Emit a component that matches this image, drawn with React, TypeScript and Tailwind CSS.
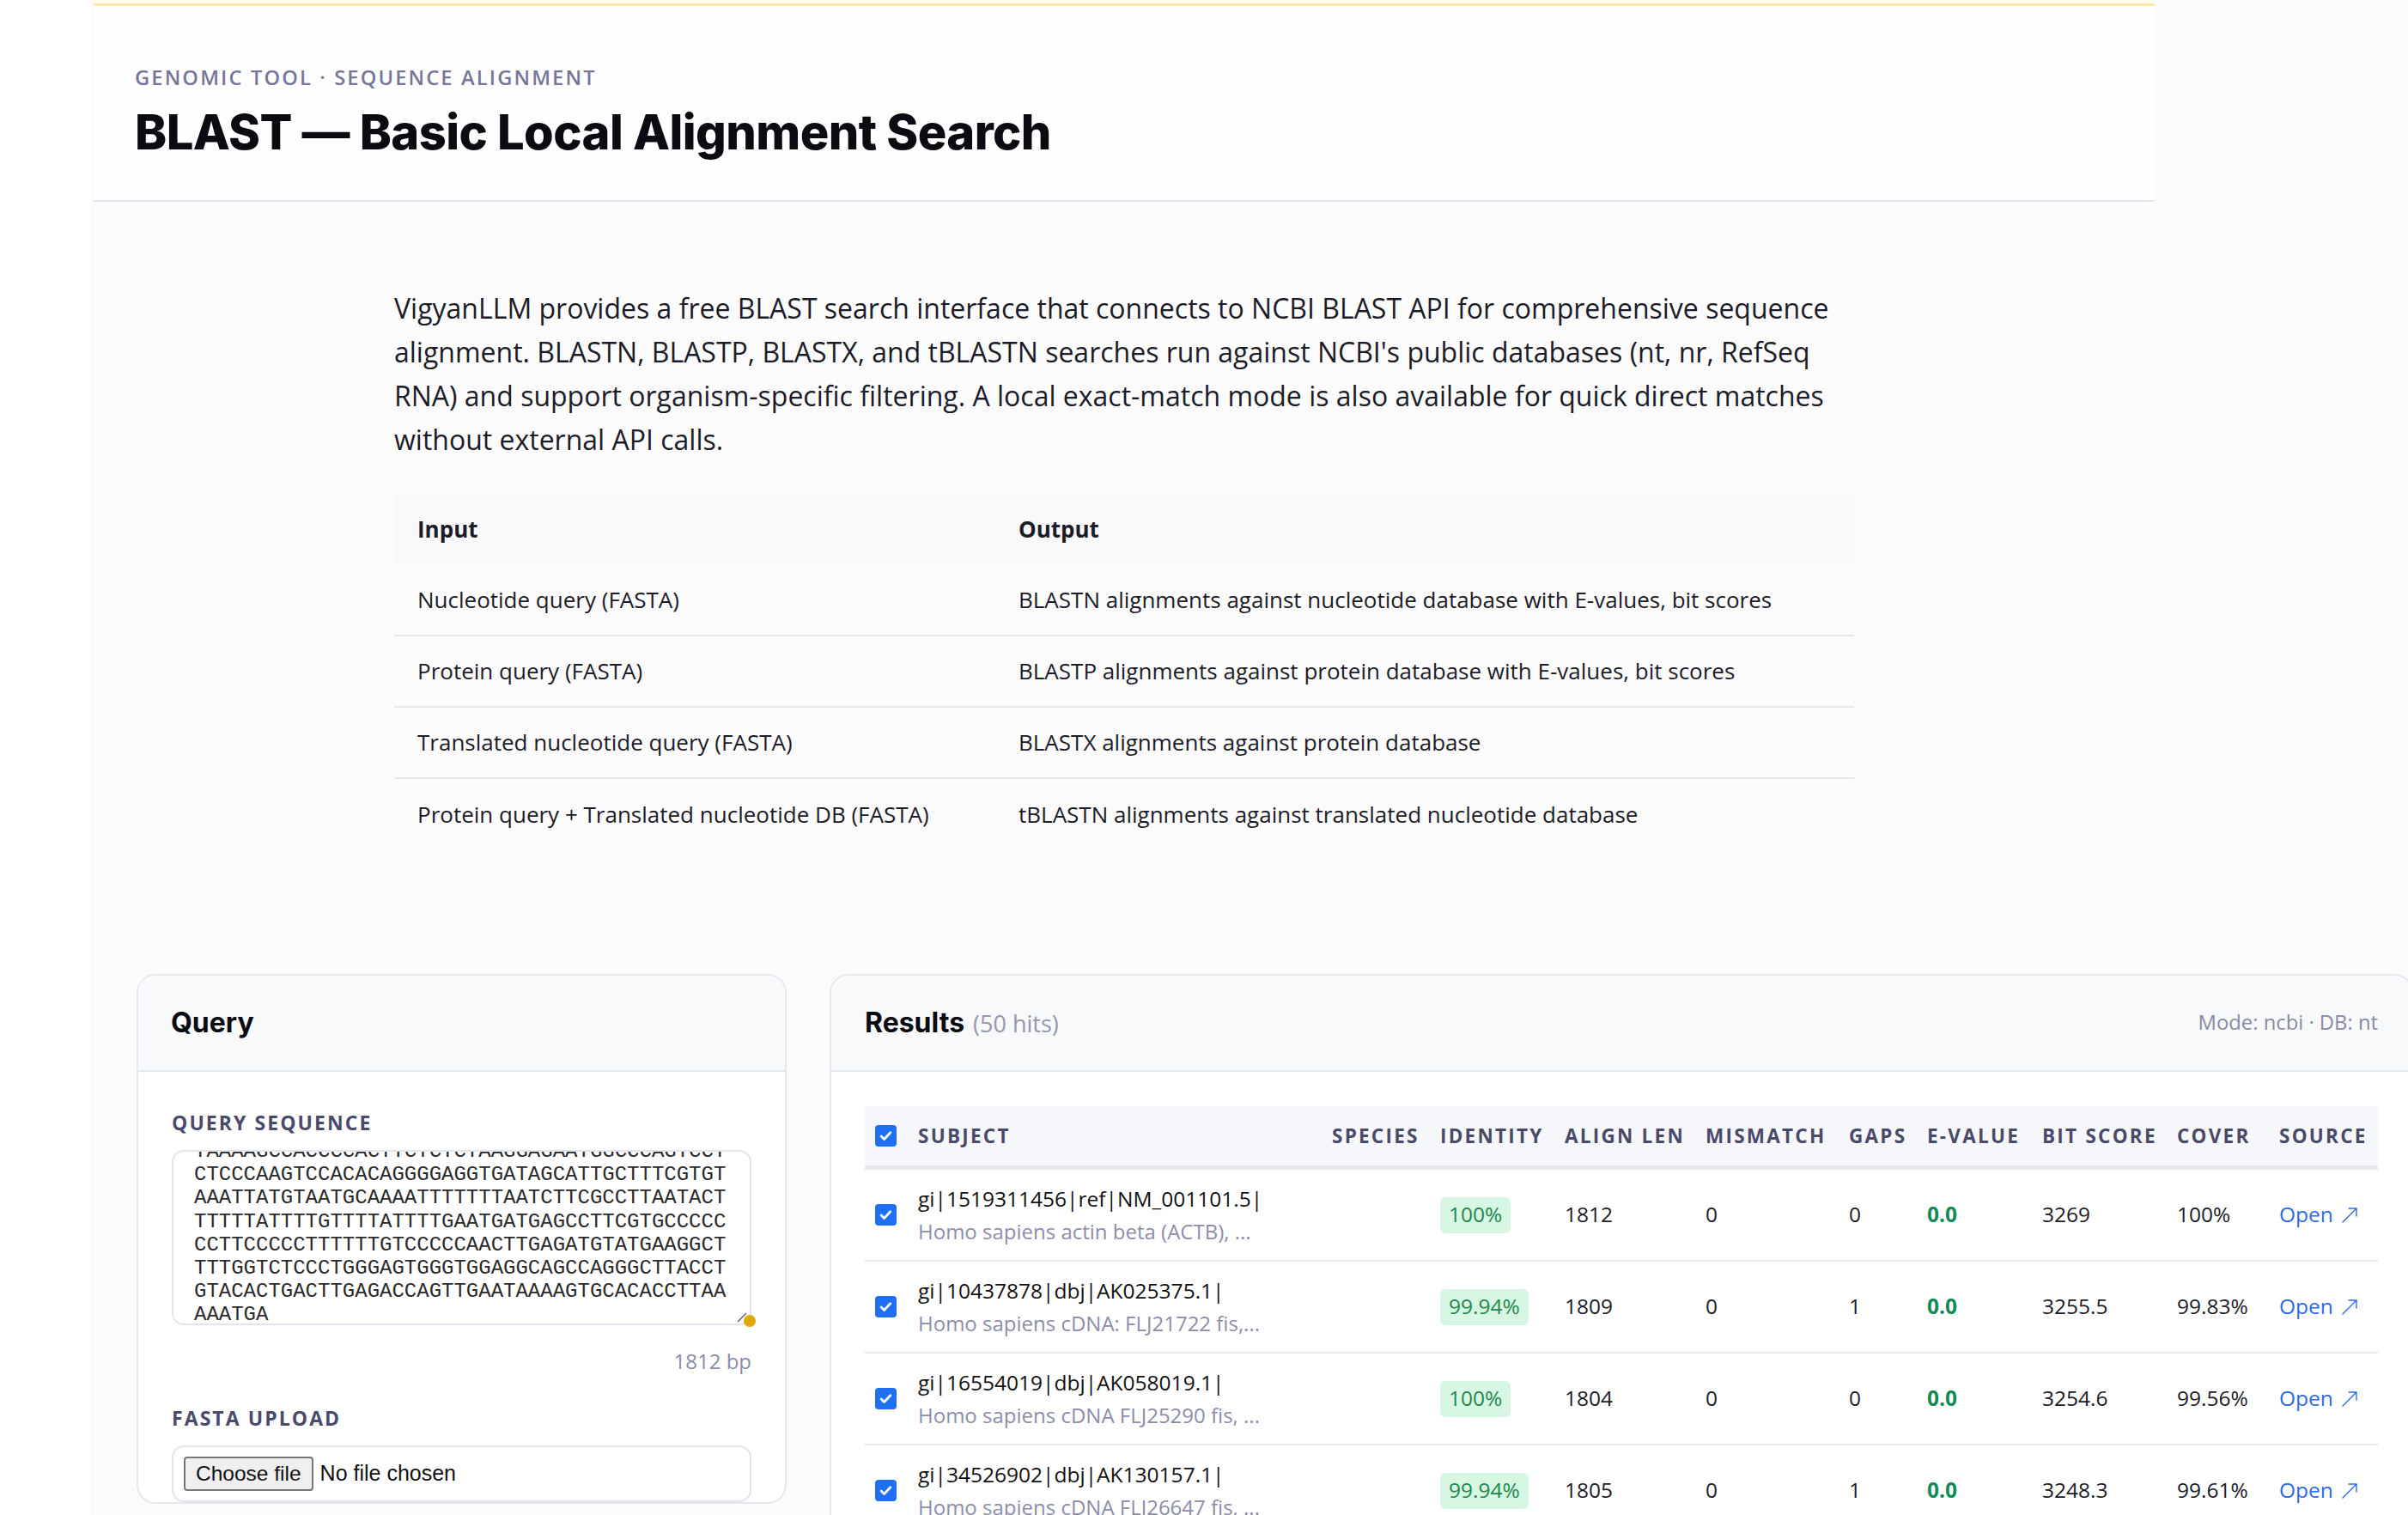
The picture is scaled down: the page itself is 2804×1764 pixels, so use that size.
const sans = "font-['Open_Sans','Noto_Sans',sans-serif]";
const display = "font-['Inter','Lato',sans-serif]";

const seqLines = [
  "TAAAAGCCACCCCACTTCTCTCTAAGGAGAATGGCCCAGTCCT",
  "CTCCCAAGTCCACACAGGGGAGGTGATAGCATTGCTTTCGTGT",
  "AAATTATGTAATGCAAAATTTTTTTAATCTTCGCCTTAATACT",
  "TTTTTATTTTGTTTTATTTTGAATGATGAGCCTTCGTGCCCCC",
  "CCTTCCCCCTTTTTTGTCCCCCAACTTGAGATGTATGAAGGCT",
  "TTTGGTCTCCCTGGGAGTGGGTGGAGGCAGCCAGGGCTTACCT",
  "GTACACTGACTTGAGACCAGTTGAATAAAAGTGCACACCTTAA",
  "AAATGA",
];

const ioRows = [
  ["Nucleotide query (FASTA)", "BLASTN alignments against nucleotide database with E-values, bit scores"],
  ["Protein query (FASTA)", "BLASTP alignments against protein database with E-values, bit scores"],
  ["Translated nucleotide query (FASTA)", "BLASTX alignments against protein database"],
  ["Protein query + Translated nucleotide DB (FASTA)", "tBLASTN alignments against translated nucleotide database"],
];

const hits = [
  { id: "gi|1519311456|ref|NM_001101.5|", desc: "Homo sapiens actin beta (ACTB), ...", ident: "100%", len: "1812", mm: "0", gaps: "0", ev: "0.0", bit: "3269", cover: "100%" },
  { id: "gi|10437878|dbj|AK025375.1|", desc: "Homo sapiens cDNA: FLJ21722 fis,...", ident: "99.94%", len: "1809", mm: "0", gaps: "1", ev: "0.0", bit: "3255.5", cover: "99.83%" },
  { id: "gi|16554019|dbj|AK058019.1|", desc: "Homo sapiens cDNA FLJ25290 fis, ...", ident: "100%", len: "1804", mm: "0", gaps: "0", ev: "0.0", bit: "3254.6", cover: "99.56%" },
  { id: "gi|34526902|dbj|AK130157.1|", desc: "Homo sapiens cDNA FLJ26647 fis, ...", ident: "99.94%", len: "1805", mm: "0", gaps: "1", ev: "0.0", bit: "3248.3", cover: "99.61%" },
];

const cols = "grid grid-cols-[50px_482px_126px_145px_164px_167px_91px_134px_157px_119px_127px]";

function Check() {
  return (
    <span className="flex h-[25px] w-[25px] items-center justify-center rounded-[4px] bg-[#1f6ff2]">
      <svg width="17" height="17" viewBox="0 0 16 16" fill="none">
        <path d="M3 8.5l3.2 3.2L13 4.5" stroke="white" strokeWidth="2.6" strokeLinecap="round" strokeLinejoin="round" />
      </svg>
    </span>
  );
}

function ArrowOut() {
  return (
    <svg width="22" height="22" viewBox="0 0 22 22" fill="none" className="ml-[8px]">
      <path d="M3 19L19 3M10 3h9v9" stroke="#2f6be6" strokeWidth="1.4" strokeLinecap="round" strokeLinejoin="round" />
    </svg>
  );
}

export default function App() {
  return (
    <div className={`${sans} relative h-[1764px] w-[2804px] overflow-hidden bg-white text-[#14141f]`}>
      <main className="ml-[105px] min-h-full bg-[#fbfbfc] pl-[4px]">
        {/* page header */}
        <header className="w-[2400px] border-b-2 border-[#e4e6f1] bg-[#fefefe]">
          <div className="h-[4px] bg-[#fffaea]" />
          <div className="h-[3px] bg-[#fde9a6]" />
          <div className="px-[48px] pb-[47px] pt-[67px]">
            <p className="text-[23.7px] leading-[32px] font-semibold tracking-[0.09em] text-[#76769a]">
              GENOMIC TOOL · SEQUENCE ALIGNMENT
            </p>
            <h1 className={`${display} mt-[16px] text-[56px] leading-[64px] font-extrabold tracking-[-0.01em] text-[#0b0b12]`}>
              BLAST — Basic Local Alignment Search
            </h1>
          </div>
        </header>

        <div className="w-[2400px]">
          {/* description */}
          <section className="mx-auto w-[1700px] pt-[98px]">
            <p className="text-[32px] leading-[51px] text-[#1c1c28]">
              VigyanLLM provides a free BLAST search interface that connects to NCBI BLAST API for comprehensive sequence
              alignment. BLASTN, BLASTP, BLASTX, and tBLASTN searches run against NCBI's public databases (nt, nr, RefSeq
              RNA) and support organism-specific filtering. A local exact-match mode is also available for quick direct
              matches without external API calls.
            </p>

            <table className="mt-[38px] w-full border-collapse text-[26px] text-[#1c1c28]">
              <thead>
                <tr className="h-[82px] bg-[#f7f8fa]">
                  <th className="w-[727px] pl-[27px] text-left font-bold">Input</th>
                  <th className="pl-0 text-left font-bold">Output</th>
                </tr>
              </thead>
              <tbody>
                {ioRows.map(([a, b], i) => (
                  <tr key={a} className={`h-[83px] ${i < ioRows.length - 1 ? "border-b-2 border-[#e6e7eb]" : ""}`}>
                    <td className="pl-[27px]">{a}</td>
                    <td>{b}</td>
                  </tr>
                ))}
              </tbody>
            </table>
          </section>
        </div>

        {/* tool panels */}
        <div className="mt-[145px] flex items-start gap-[50px] pl-[50px]">
          {/* query panel */}
          <div className="w-[757px] shrink-0 overflow-hidden rounded-[22px] border-2 border-[#e6e8f0] bg-white">
            <div className="flex h-[112px] items-center border-b-2 border-[#e6e8f0] bg-[#f8f9fb] px-[38px]">
              <h2 className={`${display} text-[32px] font-bold text-[#0b0b12]`}>Query</h2>
            </div>
            <div className="px-[39px] pt-[43px]">
              <label className="block text-[23px] leading-[32px] font-bold tracking-[0.09em] text-[#4a4a6c]">
                QUERY SEQUENCE
              </label>
              <div className="relative mt-[16px]">
                <div className="h-[204px] overflow-hidden rounded-[14px] border-2 border-[#e3e5ee] bg-white pl-[24px]">
                  <div className="-mt-[14px] font-['Liberation_Mono',monospace] text-[24px] leading-[27.2px] text-[#2a2a2a]">
                    {seqLines.map((l, i) => (
                      <div key={i}>{l}</div>
                    ))}
                  </div>
                </div>
                <svg className="absolute bottom-[3px] right-[4px]" width="14" height="14" viewBox="0 0 14 14">
                  <path d="M2 13L12 3" stroke="#555" strokeWidth="1.3" />
                </svg>
                <span className="absolute bottom-[-2px] right-[-5px] h-[14px] w-[14px] rounded-full bg-[#e0a80c]" />
              </div>
              <div className="mt-[26px] text-right text-[24px] leading-[32px] text-[#8c8ca6]">1812 bp</div>
              <label className="mt-[34px] block text-[23px] leading-[32px] font-bold tracking-[0.09em] text-[#4a4a6c]">
                FASTA UPLOAD
              </label>
              <div className="mt-[16px] flex h-[66px] items-center rounded-[14px] border-2 border-[#e3e5ee] bg-white pl-[12px]">
                <span className="flex h-[40px] items-center rounded-[4px] border-2 border-[#767676] bg-[#efefef] px-[12px] font-['Liberation_Sans',sans-serif] text-[24.5px] text-[#111]">
                  Choose file
                </span>
                <span className="ml-[8px] font-['Liberation_Sans',sans-serif] text-[25px] text-[#111]">No file chosen</span>
              </div>
            </div>
          </div>

          {/* results panel */}
          <div className="w-[1844px] shrink-0 overflow-hidden rounded-[22px] border-2 border-[#e6e8f0] bg-white">
            <div className="flex h-[112px] items-center justify-between border-b-2 border-[#e6e8f0] bg-[#f8f9fb] pl-[39px] pr-[39px]">
              <h2 className="flex items-baseline gap-[10px]">
                <span className={`${display} text-[32px] font-bold text-[#0b0b12]`}>Results</span>
                <span className="text-[27px] text-[#9696ad]">(50 hits)</span>
              </h2>
              <span className="text-[23.8px] text-[#8a8aa2]">Mode: ncbi · DB: nt</span>
            </div>
            <div className="px-[39px] pt-[40px]">
              <div className={`${cols} h-[74px] items-center border-b-[5px] border-[#e6e8ee] bg-[#f6f7fa] text-[22.5px] font-bold tracking-[0.1em] text-[#4a4a68]`}>
                <div className="pl-[12px]"><Check /></div>
                {["SUBJECT", "SPECIES", "IDENTITY", "ALIGN LEN", "MISMATCH", "GAPS", "E-VALUE", "BIT SCORE", "COVER", "SOURCE"].map((h) => (
                  <div key={h} className="whitespace-nowrap pl-[12px]">{h}</div>
                ))}
              </div>
              {hits.map((h) => (
                <div key={h.id} className={`${cols} h-[107px] items-center border-b-2 border-[#e8eaf1] text-[24.5px] text-[#1c1c28]`}>
                  <div className="pl-[12px]"><Check /></div>
                  <div className="pl-[12px]">
                    <div className="leading-[38px] text-[#111]">{h.id}</div>
                    <div className="text-[24px] leading-[38px] text-[#8d8dab]">{h.desc}</div>
                  </div>
                  <div className="pl-[12px]" />
                  <div className="pl-[12px]">
                    <span className="inline-flex h-[42px] items-center rounded-[6px] bg-[#d8f6e4] px-[10px] text-[#1d8a4c]">{h.ident}</span>
                  </div>
                  <div className="pl-[12px]">{h.len}</div>
                  <div className="pl-[12px]">{h.mm}</div>
                  <div className="pl-[12px]">{h.gaps}</div>
                  <div className="pl-[12px] font-bold text-[#118a57]">{h.ev}</div>
                  <div className="pl-[12px]">{h.bit}</div>
                  <div className="pl-[12px]">{h.cover}</div>
                  <div className="flex items-center pl-[12px] text-[#2f6be6]">
                    Open
                    <ArrowOut />
                  </div>
                </div>
              ))}
            </div>
          </div>
        </div>
      </main>
    </div>
  );
}
